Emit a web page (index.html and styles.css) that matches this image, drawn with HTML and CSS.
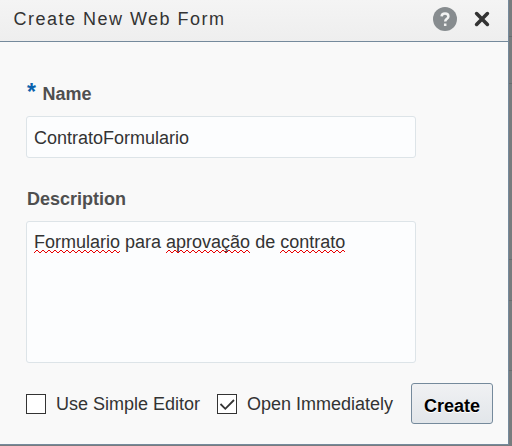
FILE: index.html
```html
<!DOCTYPE html>
<html lang="en">
<head>
<meta charset="utf-8">
<title>Create New Web Form</title>
<link rel="stylesheet" href="styles.css">
</head>
<body>
<section class="dialog">
  <header class="header">
    <h1 class="title">Create New Web Form</h1>
    <svg class="help" viewBox="0 0 24 24"><circle cx="12" cy="12" r="12"/><path d="M8.6 9.4C8.7 7.5 10 6.6 12 6.6c2 0 3.4 1 3.4 2.8 0 2.4-3.2 2.5-3.2 5.2M12.2 16.4v2.6"/></svg>
    <svg class="close" viewBox="0 0 16 16"><path d="M2.6 2.6l10.8 10.8M13.4 2.6L2.6 13.4"/></svg>
  </header>
  <main class="form">
    <div class="label"><span class="star">*</span>Name</div>
    <div class="field name">ContratoFormulario</div>
    <div class="label desc-label">Description</div>
    <div class="field desc"><span class="typo">Formulario</span> para <span class="typo">aprovação</span> de <span class="typo">contrato</span></div>
    <div class="actions">
      <span class="box"></span>
      <span class="option simple">Use Simple Editor</span>
      <span class="box"><svg viewBox="0 0 18 18"><path d="M2.5 9l4.8 4.8L16 5"/></svg></span>
      <span class="option open">Open Immediately</span>
      <button class="create">Create</button>
    </div>
  </main>
</section>
</body>
</html>
```

FILE: styles.css
```css
* { box-sizing: border-box; }
body {
  margin: 0;
  height: 446px;
  overflow: hidden;
  background: linear-gradient(#787c7e 36px, #686c6e 36px 37px, #787c7e 37px 83px, #686c6e 83px 84px, #787c7e 84px 259px, #686c6e 259px 260px, #787c7e 260px 300px, #686c6e 300px 301px, #787c7e 301px 370px, #686c6e 370px 371px, #787c7e 371px);
  font: 18px/20px "Liberation Sans", Arial, sans-serif;
  color: #333;
}
.dialog {
  width: 509px;
  height: 445px;
  background: #f9f9f9;
  border: solid #758a9c;
  border-width: 0 1px 1px 0;
}
.header {
  display: flex;
  align-items: center;
  height: 42px;
  padding: 0 18px 4px 13.4px;
  background: linear-gradient(#f4f4f4, #eee);
  border-bottom: 1px solid #758a9c;
}
.title {
  flex: 1;
  margin: 0;
  font-size: 18px;
  font-weight: normal;
  letter-spacing: 1.5px;
  white-space: nowrap;
}
.help { width: 24px; height: 24px; margin-right: 17px; fill: #878c8f; }
.help path { fill: none; stroke: #f2f2f2; stroke-width: 2.5; }
.close { width: 16px; height: 16px; fill: none; stroke: #333; stroke-width: 3.6; stroke-linecap: round; }
.form { padding: 42px 14px 0 26px; }
.label { height: 32px; padding-left: 1px; font-weight: bold; color: #4f4f4f; }
.star { display: inline-block; width: 15.4px; font-size: 23px; line-height: 0; color: #0b62ad; }
.field {
  width: 390px;
  padding: 11px 7px;
  background: #fcfdfe;
  border: 1px solid #dde4e8;
  border-radius: 3px;
}
.name { height: 42px; }
.desc-label { margin-top: 31px; }
.desc { height: 142px; padding-top: 10px; }
.typo {
  padding-bottom: 1px;
  background: url("data:image/svg+xml,%3Csvg xmlns='http://www.w3.org/2000/svg' width='6' height='3' shape-rendering='crispEdges'%3E%3Cpath d='M0 2h1v1h-1zM1 1h1v1h-1zM2 0h2v1h-2zM4 1h1v1h-1zM5 2h1v1h-1z' fill='%23e80000'/%3E%3C/svg%3E") repeat-x left bottom;
}
.actions { display: flex; align-items: center; height: 41px; margin-top: 20px; }
.box { width: 20px; height: 20px; background: #fff; border: 1px solid #333; }
.box svg { display: block; width: 18px; height: 18px; fill: none; stroke: #333; stroke-width: 1.8; }
.option { padding-left: 10px; white-space: nowrap; }
.simple { width: 171px; }
.open { width: 174px; }
.create {
  width: 82px;
  height: 41px;
  padding: 4px 0 0;
  border: 1px solid #758a9c;
  border-radius: 3px;
  background: linear-gradient(#f0f1f3, #e2e6ea);
  font: bold 18px/20px "Liberation Sans", Arial, sans-serif;
  color: #000;
  text-shadow: 0 1px #fff;
}
```
